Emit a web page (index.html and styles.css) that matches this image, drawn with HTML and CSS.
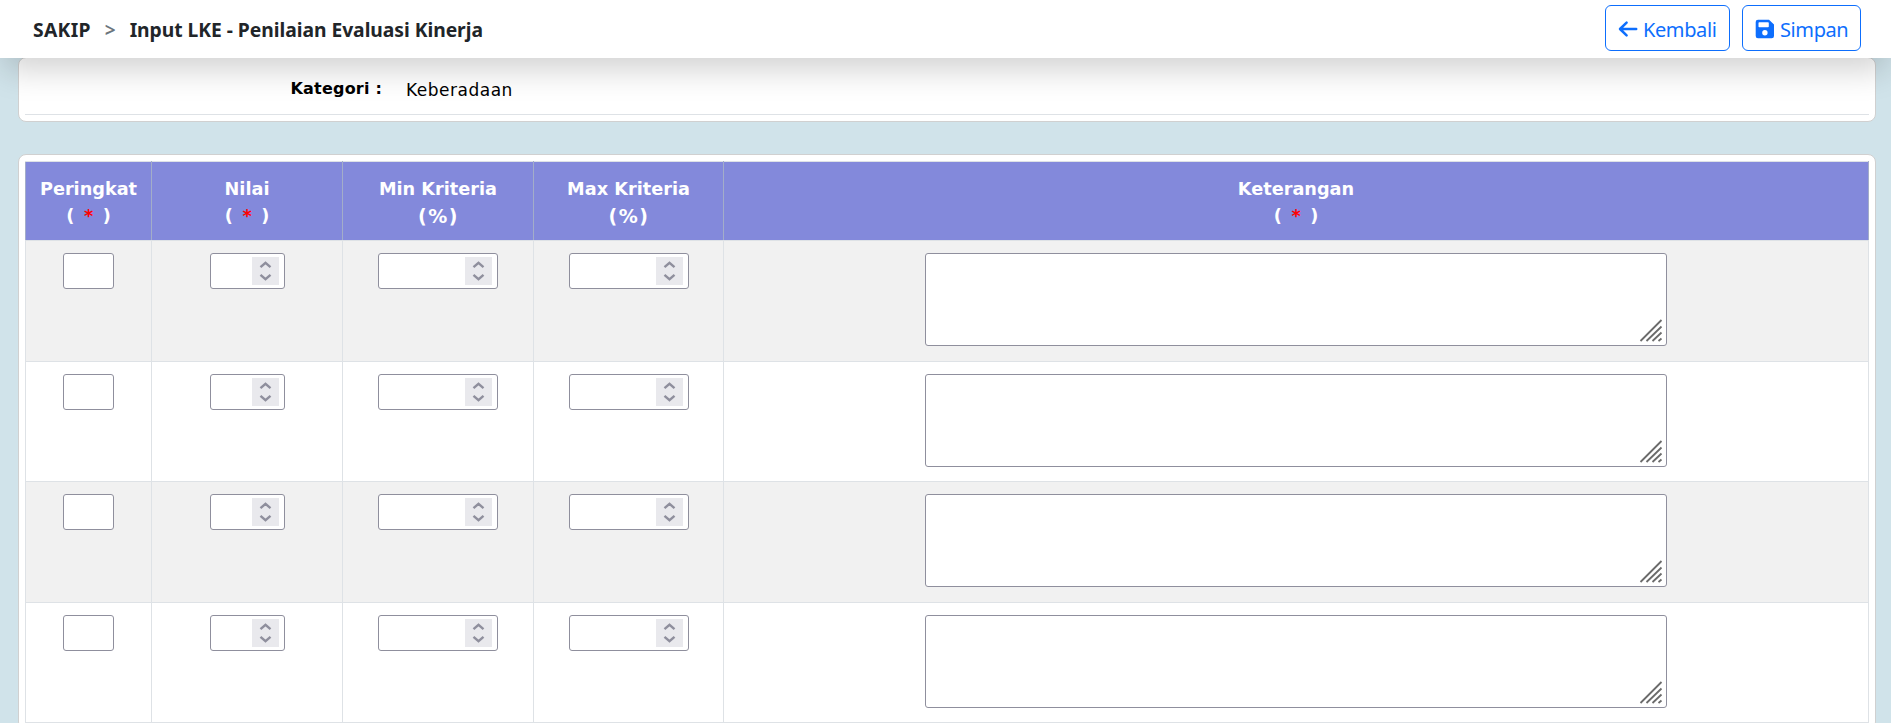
FILE: index.html
```
<!DOCTYPE html>
<html lang="id">

<head>
  <meta charset="UTF-8">
  <meta name="viewport" content="width=device-width, initial-scale=1.0">
  <title>SAKIP - Input LKE</title>
  <link rel="stylesheet" href="styles.css">
</head>

<body>

  <nav class="navbar">
    <div class="breadcrumb">
      <span class="app">SAKIP</span>
      <span class="sep">&gt;</span>
      <span class="page">Input LKE - Penilaian Evaluasi Kinerja</span>
    </div>
    <div class="actions">
      <button class="btn back" type="button">
        <svg width="20" height="20" viewBox="0 0 20 20" fill="none" stroke="currentColor" stroke-width="2.5" stroke-linecap="round" stroke-linejoin="round">
          <path d="M8.600 3.600L2 10L8.600 16.400M2.200 10H18.200" />
        </svg>
        <span>Kembali</span>
      </button>
      <button class="btn save" type="button">
        <svg width="20" height="20" viewBox="0 0 20 20" fill="currentColor" fill-rule="evenodd">
          <path d="M3 .8H14L19 5.6V17a2.3 2.3 0 0 1-2.3 2.3H3A2.3 2.3 0 0 1 .7 17V3.1A2.3 2.3 0 0 1 3 .8ZM4.3 3.2a.8.8 0 0 0-.8.8V7.400a.8.8 0 0 0 .8.8H13a.8.8 0 0 0 .8-.8V4a.8.8 0 0 0-.8-.8ZM9.900 11a2.700 2.700 0 1 0 0 5.400a2.700 2.700 0 0 0 0-5.400Z" />
        </svg>
        <span>Simpan</span>
      </button>
    </div>
  </nav>

  <div class="card info">
    <div class="info-row">
      <div class="label">Kategori :</div>
      <div class="value">Keberadaan</div>
    </div>
  </div>

  <div class="card">
    <table class="table">
      <colgroup>
        <col class="c1">
        <col class="c2">
        <col class="c3">
        <col class="c4">
        <col>
      </colgroup>
      <thead>
        <tr>
          <th>Peringkat<div class="req">( <i>*</i> )</div></th>
          <th>Nilai<div class="req">( <i>*</i> )</div></th>
          <th>Min Kriteria<div class="unit">(%)</div></th>
          <th>Max Kriteria<div class="unit">(%)</div></th>
          <th>Keterangan<div class="req">( <i>*</i> )</div></th>
        </tr>
      </thead>
      <tbody id="rows"></tbody>
    </table>
  </div>

  <script>
    var spin = '<svg class="spin" width="27" height="28" viewBox="0 0 27 28">' +
      '<rect width="27" height="28" fill="#e9e9ed" />' +
      '<path d="M8.500 10.200L13.500 5.800L18.500 10.200M8.500 17.800L13.500 22.200L18.500 17.800" /></svg>';

    var grip = '<svg class="grip" width="24" height="24" viewBox="0 0 24 24">' +
      '<path d="M1.500 22L22.500 1M7.500 22L22.500 7.500M13.500 22L22.500 13.500M19.500 22L22.500 19.500" /></svg>';

    function numberField(cls) {
      return '<div class="field ' + cls + '"><input type="text" inputmode="decimal">' + spin + '</div>';
    }

    var html = "";
    for (var i = 0; i < 4; i++) {
      html += '<tr>' +
        '<td><div class="field rank"><input type="text"></div></td>' +
        '<td>' + numberField("nilai") + '</td>' +
        '<td>' + numberField("kriteria") + '</td>' +
        '<td>' + numberField("kriteria") + '</td>' +
        '<td><div class="field note"><textarea></textarea>' + grip + '</div></td>' +
        '</tr>';
    }
    document.getElementById("rows").innerHTML = html;
  </script>
</body>

</html>
```
FILE: styles.css
```
* {
  box-sizing: border-box;
}

html,
body {
  height: 100%;
}

body {
  margin: 0;
  overflow: hidden;
  background-color: #d0e3ea;
  font-family: "DejaVu Sans", sans-serif;
  color: #000;
}

.navbar {
  position: relative;
  z-index: 2;
  display: flex;
  justify-content: space-between;
  align-items: center;
  height: 58px;
  padding: 0 30px 2px 33px;
  background-color: #fff;
  box-shadow: 0 16px 32px -4px rgba(0, 0, 0, .18);
}

.breadcrumb {
  display: flex;
  align-items: center;
  padding-top: 2px;
  font-family: "Noto Sans", sans-serif;
  font-size: 19.3px;
  font-weight: 700;
  color: #212529;
  white-space: nowrap;
}

.breadcrumb .app {
  letter-spacing: .3px;
}

.breadcrumb .page {
  letter-spacing: -.04px;
}

.breadcrumb .sep {
  margin: 0 14px;
  padding-top: 1px;
  font-size: 19px;
  font-weight: 600;
  color: #6c757d;
}

.actions {
  display: flex;
  gap: 12px;
}

.btn {
  display: flex;
  align-items: center;
  gap: 5px;
  height: 46px;
  padding: 0 0 0 12px;
  border: 1px solid #0d6efd;
  border-radius: 6px;
  background-color: #fff;
  font-family: "Noto Sans", sans-serif;
  font-size: 20px;
  letter-spacing: -.4px;
  color: #0d6efd;
}

.btn span {
  padding-top: 2px;
}

.btn svg {
  margin-top: 2px;
}

.btn.back {
  width: 125px;
}

.btn.save {
  width: 119px;
}

.card {
  margin: 0 15px 32px 18px;
  padding: 6px;
  border: 1px solid #d0d0d0;
  border-radius: 8px;
  background-color: #fff;
}

.card.info {
  height: 65px;
  margin-top: -1px;
}

.info-row {
  display: flex;
  height: 51px;
  padding-top: 14px;
  border-bottom: 1px solid #dee2e6;
}

.info-row .label {
  width: 357px;
  font-size: 16px;
  font-weight: bold;
  line-height: 22px;
  letter-spacing: .2px;
  text-align: right;
}

.info-row .value {
  margin-left: 24px;
  font-size: 17px;
  line-height: 24px;
  letter-spacing: .5px;
}

.table {
  width: 1844px;
  table-layout: fixed;
  border-collapse: collapse;
}

.c1 {
  width: 126px;
}

.c2,
.c3 {
  width: 191px;
}

.c4 {
  width: 190px;
}

.table th {
  height: 79px;
  padding: 3px 0 0;
  border: 1px solid #a3adc9;
  border-top-color: #dee2e6;
  border-bottom-color: #dee2e6;
  background-color: #8389db;
  color: #fff;
  font-size: 17.7px;
  line-height: 27px;
}

.table .req {
  padding-left: 2px;
  letter-spacing: 1.7px;
}

.table .unit {
  padding-left: 1px;
  font-size: 19px;
  letter-spacing: 1.5px;
}

.table th i {
  font-style: normal;
  color: #f00;
}

.table td {
  height: 120px;
  padding: 12px 0 0;
  border: 1px solid #dee2e6;
  vertical-align: top;
}

.table tbody tr:nth-child(odd) td {
  height: 121px;
  background-color: #f1f1f1;
}

.field {
  position: relative;
  height: 36px;
  margin: 0 auto;
}

.field input,
.field textarea {
  display: block;
  width: 100%;
  height: 100%;
  margin: 0;
  padding: 4px;
  border: 1px solid #8f8f9d;
  border-radius: 3px;
  background-color: #fff;
  font: inherit;
  outline: none;
  resize: none;
}

.rank {
  width: 51px;
}

.nilai {
  width: 75px;
}

.kriteria {
  width: 120px;
}

.note {
  width: 742px;
  height: 93px;
}

.spin {
  position: absolute;
  top: 4px;
  right: 6px;
}

.spin path {
  fill: none;
  stroke: #8f8f9d;
  stroke-width: 2.4;
}

.grip {
  position: absolute;
  right: 4px;
  bottom: 3px;
}

.grip path {
  stroke: #6b6b6b;
  stroke-width: 1.8;
}
```
